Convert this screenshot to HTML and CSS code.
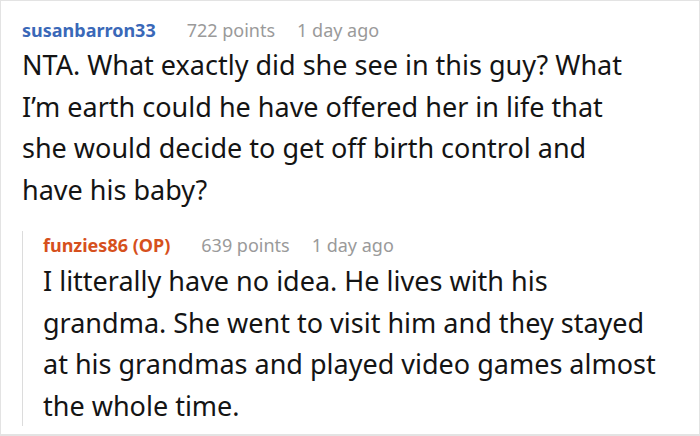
FILE: index.html
```html
<!DOCTYPE html>
<html>
<head>
<meta charset="utf-8">
<link rel="stylesheet" href="styles.css">
</head>
<body>
<div class="card">
  <div class="comment">
    <div class="meta">
      <span class="user">susanbarron33</span>
      <span class="points">722 points</span>
      <span class="time">1 day ago</span>
    </div>
    <p class="text">NTA. What exactly did she see in this guy? What I’m earth could he have offered her in life that she would decide to get off birth control and have his baby?</p>
    <div class="reply">
      <div class="meta">
        <span class="user op">funzies86 (OP)</span>
        <span class="points">639 points</span>
        <span class="time">1 day ago</span>
      </div>
      <p class="text">I litterally have no idea. He lives with his grandma. She went to visit him and they stayed at his grandmas and played video games almost the whole time.</p>
    </div>
  </div>
</div>
</body>
</html>
```
FILE: styles.css
```css
html, body {
  margin: 0;
  padding: 0;
  background: #ffffff;
}
.card {
  box-sizing: border-box;
  width: 700px;
  height: 436px;
  border: 1px solid #e3e3e3;
  border-bottom-width: 2px;
  overflow: hidden;
  font-family: "Noto Sans", "Open Sans", sans-serif;
}
.comment {
  padding: 15px 0 0 21px;
}
.meta {
  display: flex;
  align-items: baseline;
  height: 28px;
  line-height: 28px;
  font-size: 18px;
  color: #9a9a9a;
  white-space: nowrap;
}
.user {
  font-weight: 700;
  color: #3a68b8;
  margin-right: 31px;
}
.user.op {
  color: #d6501d;
}
.points {
  margin-right: 22px;
}
.text {
  margin: 0;
  font-size: 27px;
  line-height: 41.5px;
  color: #141414;
}
.comment > .text {
  width: 625px;
}
.reply {
  margin-top: 33px;
  padding-left: 20px;
  border-left: 1px solid #dcdcdc;
}
.reply > .meta {
  margin-top: -12px;
  margin-bottom: 1px;
}
.reply .text {
  width: 618px;
  margin-bottom: -8px;
}
```
